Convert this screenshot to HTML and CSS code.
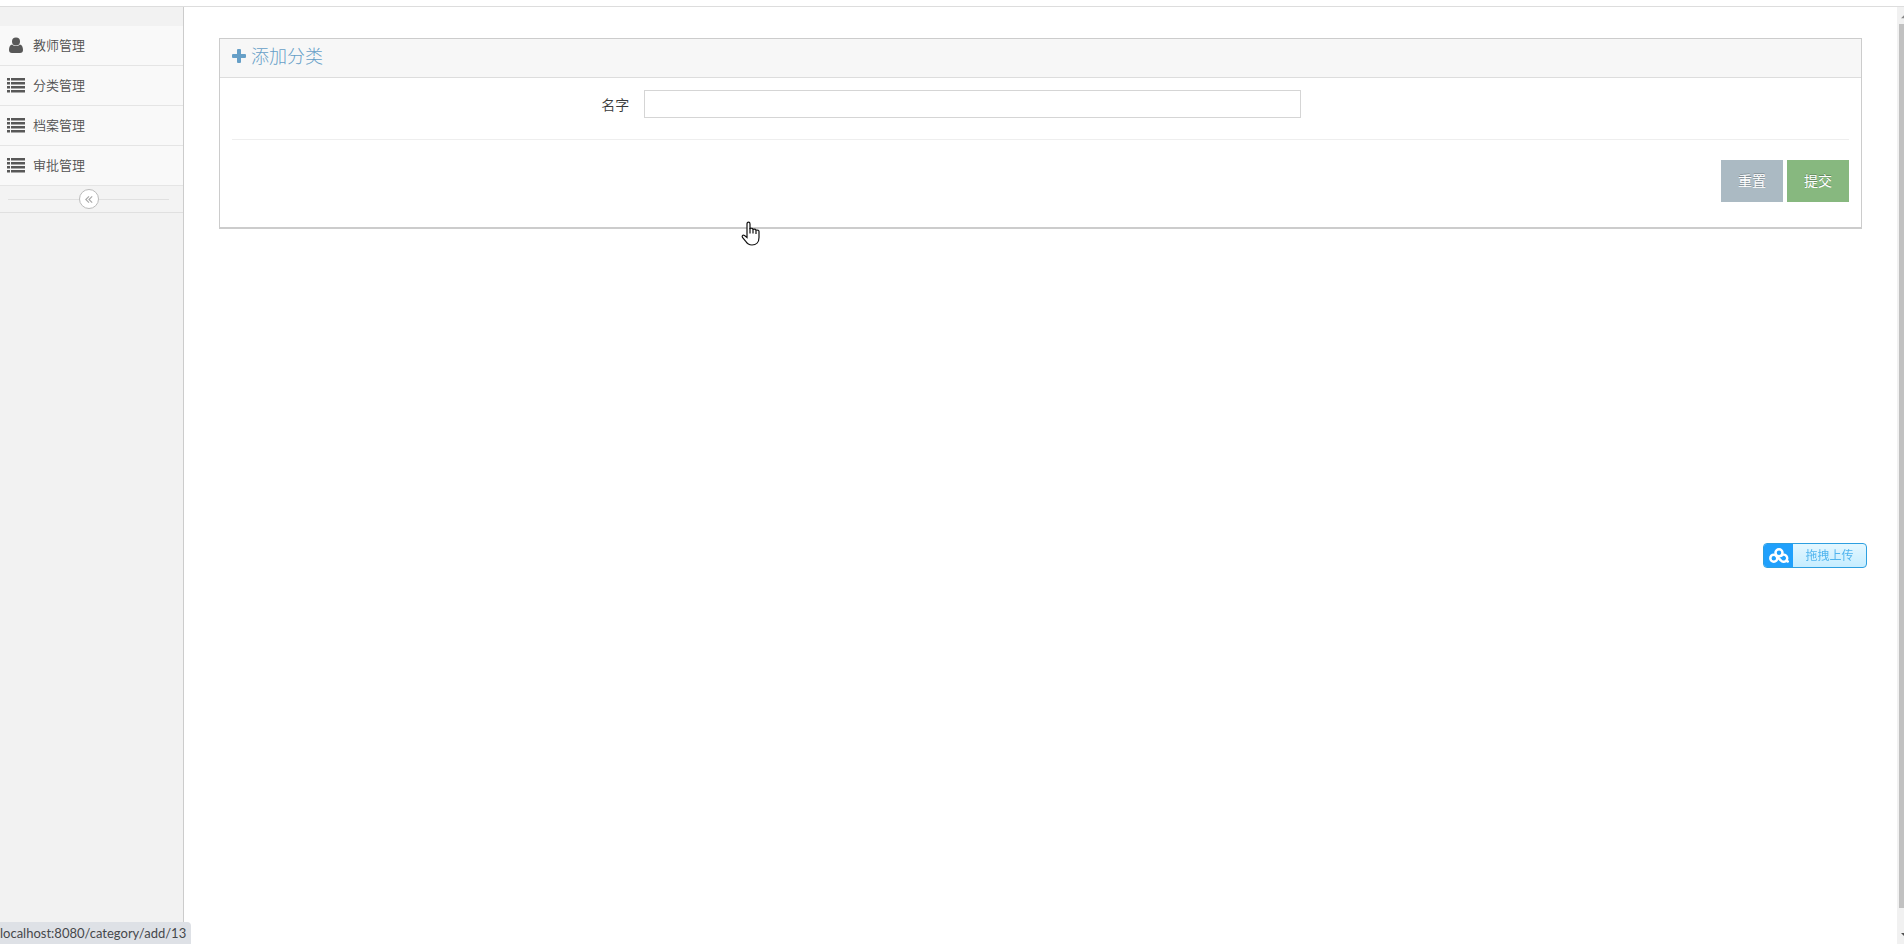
FILE: index.html
```
<!DOCTYPE html>
<html lang="zh-CN">
<head>
    <meta charset="UTF-8">
    <title>添加分类</title>
    <link rel="stylesheet" href="styles.css">
</head>
<body>
    <svg class="symbols" width="0" height="0">
        <symbol id="icon-list" viewBox="0 0 18 16">
            <path d="M0 1h3v2.600H0zM4 1h14v2.600H4zM0 5h3v2.600H0zM4 5h14v2.600H4zM0 9h3v2.600H0zM4 9h14v2.600H4zM0 13h3v2.600H0zM4 13h14v2.600H4z"/>
        </symbol>
    </svg>
    <header class="navbar"></header>
    <div class="main-container">
        <nav class="sidebar">
            <ul class="nav-list">
                <li>
                    <a href="#">
                        <svg class="menu-icon" viewBox="0 0 18 16">
                            <circle cx="9" cy="4.500" r="4"/>
                            <path d="M5.200 7.500C3 7.800 2 10 2 13 2 15 3 16 5 16h8c2 0 3-1 3-3 0-3-1-5.200-3.200-5.500-1 1-2.300 1.600-3.800 1.600S6.200 8.500 5.200 7.500z"/>
                        </svg>
                        <span>教师管理</span>
                    </a>
                </li>
                <li><a href="#"><svg class="menu-icon"><use href="#icon-list"/></svg><span>分类管理</span></a></li>
                <li><a href="#"><svg class="menu-icon"><use href="#icon-list"/></svg><span>档案管理</span></a></li>
                <li><a href="#"><svg class="menu-icon"><use href="#icon-list"/></svg><span>审批管理</span></a></li>
            </ul>
            <div class="sidebar-collapse">
                <button type="button" class="collapse-btn" aria-label="收起菜单">
                    <svg viewBox="0 0 10 10"><path d="M5 1L1 5l4 4M9 1L5 5l4 4"/></svg>
                </button>
            </div>
        </nav>
        <main class="page-content">
            <section class="widget-box">
                <div class="widget-header">
                    <svg class="plus-icon" viewBox="0 0 14 14"><path d="M5 1q0-1 1-1h2q1 0 1 1v4h4q1 0 1 1v2q0 1-1 1H9v4q0 1-1 1H6q-1 0-1-1V9H1q-1 0-1-1V6q0-1 1-1h4z"/></svg>
                    <h4>添加分类</h4>
                </div>
                <form class="widget-main">
                    <div class="form-group">
                        <label for="name">名字</label>
                        <div class="field">
                            <input type="text" id="name" name="name">
                        </div>
                    </div>
                    <hr>
                    <div class="form-actions">
                        <button type="reset" class="btn">重置</button>
                        <button type="submit" class="btn btn-success">提交</button>
                    </div>
                </form>
            </section>
        </main>
        <div class="scrollbar">
            <svg class="arrow" viewBox="0 0 7 18"><path d="M4 12l5-5 5 5z"/></svg>
            <div class="thumb"></div>
            <svg class="arrow arrow-down" viewBox="0 0 7 36"><path d="M4 25h10l-5 5z"/></svg>
        </div>
    </div>

    <button type="button" class="upload">
        <span class="upload-logo">
            <svg viewBox="0 0 20 16">
                <circle cx="10" cy="4.800" r="3.500"/>
                <circle cx="4.800" cy="10.200" r="3.500"/>
                <path d="M7.500 8l4.500 4.500a3.500 3.500 0 1 0 .500-5M17.500 12.500l1.200 1"/>
            </svg>
        </span>
        <span class="upload-text">拖拽上传</span>
    </button>

    <div class="status">localhost:8080/category/add/13</div>

    <svg class="cursor" viewBox="0 0 20 25">
        <path d="M6 14.500V3q0-1.800 1.500-1.800T9 3v4.500q2.500-.800 3 .800 2.500-.600 3 .900 3-.500 3 1.300v6c0 5-3 7.500-7 7.500-3.500 0-5-1.500-6.500-4L1.500 16.500c-1-2 .500-3 2-2L6 16.500z"/>
        <path d="M9 7v5.500M12 8.500v4M15 9.500v3.500"/>
    </svg>
</body>
</html>
```

FILE: styles.css
```
* {
    box-sizing: border-box;
}

body {
    margin: 0;
    min-height: 100vh;
    display: flex;
    flex-direction: column;
    background: #fff;
    color: #393939;
    font-family: "Open Sans", "Noto Sans CJK SC", sans-serif;
    font-size: 13px;
    line-height: 20px;
    overflow: hidden;
}

.symbols {
    position: absolute;
}

button,
input {
    font: inherit;
}

.navbar {
    height: 7px;
    border-bottom: 1px solid #ddd;
}

.main-container {
    flex: 1;
    display: flex;
}

/* sidebar */
.sidebar {
    width: 184px;
    padding-top: 19px;
    background: #f2f2f2;
    border-right: 1px solid #ccc;
}

.nav-list {
    margin: 0;
    padding: 0;
    list-style: none;
}

.nav-list li {
    border-bottom: 1px solid #e5e5e5;
}

.nav-list a {
    display: flex;
    align-items: center;
    gap: 8px;
    height: 39px;
    padding: 0 0 2px 7px;
    background: #f9f9f9;
    color: #505050;
    font-weight: 350;
    text-decoration: none;
}

.nav-list a:hover {
    color: #1963aa;
}

.menu-icon {
    width: 18px;
    height: 16px;
    fill: #585858;
}

.sidebar-collapse {
    display: flex;
    align-items: center;
    padding: 3px 14px 3px 8px;
    background: #f3f3f3;
    border-bottom: 1px solid #e0e0e0;
}

.sidebar-collapse::before,
.sidebar-collapse::after {
    content: "";
    flex: 1;
    border-top: 1px solid #e0e0e0;
}

.collapse-btn {
    width: 20px;
    height: 20px;
    padding: 0;
    display: flex;
    align-items: center;
    justify-content: center;
    background: #fff;
    border: 1px solid #bbb;
    border-radius: 50%;
}

.collapse-btn svg {
    width: 8px;
    height: 9px;
    fill: none;
    stroke: #aaa;
    stroke-width: 1.5;
}

/* content */
.page-content {
    flex: 1;
    padding: 31px 35px;
}

.widget-box {
    border: 1px solid #ccc;
    border-bottom-width: 2px;
}

.widget-header {
    display: flex;
    align-items: center;
    gap: 5px;
    height: 39px;
    padding: 0 12px 4px;
    background: #f7f7f7;
    border-bottom: 1px solid #ddd;
    color: #669fc7;
}

.widget-header h4 {
    margin: 0;
    font-size: 18px;
    font-weight: 300;
}

.plus-icon {
    width: 14px;
    height: 14px;
    fill: #669fc7;
}

.widget-main {
    padding: 12px 12px 25px;
}

.form-group {
    display: flex;
    margin: 0 -8px;
}

.form-group label {
    width: 25%;
    padding: 5px 3px 0 12px;
    text-align: right;
    font-size: 14px;
    font-weight: 350;
}

.field {
    width: 41.6667%;
    padding: 0 12px;
}

.field input {
    display: block;
    width: 100%;
    height: 28px;
    padding: 4px;
    border: 1px solid #d5d5d5;
}

.widget-main hr {
    margin: 21px 0 20px;
    border: 0;
    border-top: 1px solid #eee;
}

.form-actions {
    display: flex;
    justify-content: flex-end;
    gap: 4px;
}

.btn {
    width: 62px;
    height: 42px;
    padding: 0;
    border: 0;
    background: #abbac3;
    color: #fff;
    font-size: 14px;
    text-shadow: 0 -1px 0 rgba(0, 0, 0, 0.25);
    cursor: pointer;
}

.btn-success {
    background: #87b87f;
}

/* window scrollbar */
.scrollbar {
    display: flex;
    flex-direction: column;
    width: 7px;
    background: #f1f1f1;
}

.scrollbar .thumb {
    flex: 1;
    margin-left: 2px;
    background: #c1c1c1;
}

.scrollbar .arrow {
    width: 7px;
    height: 17px;
    fill: #888;
}

.scrollbar .arrow-down {
    height: 36px;
    fill: #505050;
}

/* floating upload button */
.upload {
    position: fixed;
    top: 543px;
    right: 37px;
    display: flex;
    width: 104px;
    height: 25px;
    padding: 0;
    background: linear-gradient(#e4f7ff, #c6edff);
    border: 1px solid #2d9fe0;
    border-radius: 4px;
    overflow: hidden;
    color: #50b4ee;
    font-size: 12px;
}

.upload-logo {
    display: flex;
    align-items: center;
    justify-content: center;
    width: 29px;
    height: 100%;
    background: #20a0fc;
}

.upload-logo svg {
    width: 20px;
    height: 16px;
    fill: none;
    stroke: #fff;
    stroke-width: 2.5;
    stroke-linecap: round;
}

.upload-text {
    flex: 1;
    align-self: center;
}

/* link target shown at the window bottom */
.status {
    position: fixed;
    left: 0;
    bottom: 0;
    width: 191px;
    height: 22px;
    background: #dee1e6;
    border-top-right-radius: 4px;
    color: #46484b;
    font-family: Lato, sans-serif;
    line-height: 23px;
    white-space: nowrap;
}

.cursor {
    position: absolute;
    left: 741px;
    top: 221px;
    width: 20px;
    height: 25px;
    fill: #fff;
    stroke: #111;
    stroke-width: 1.2;
}
```
